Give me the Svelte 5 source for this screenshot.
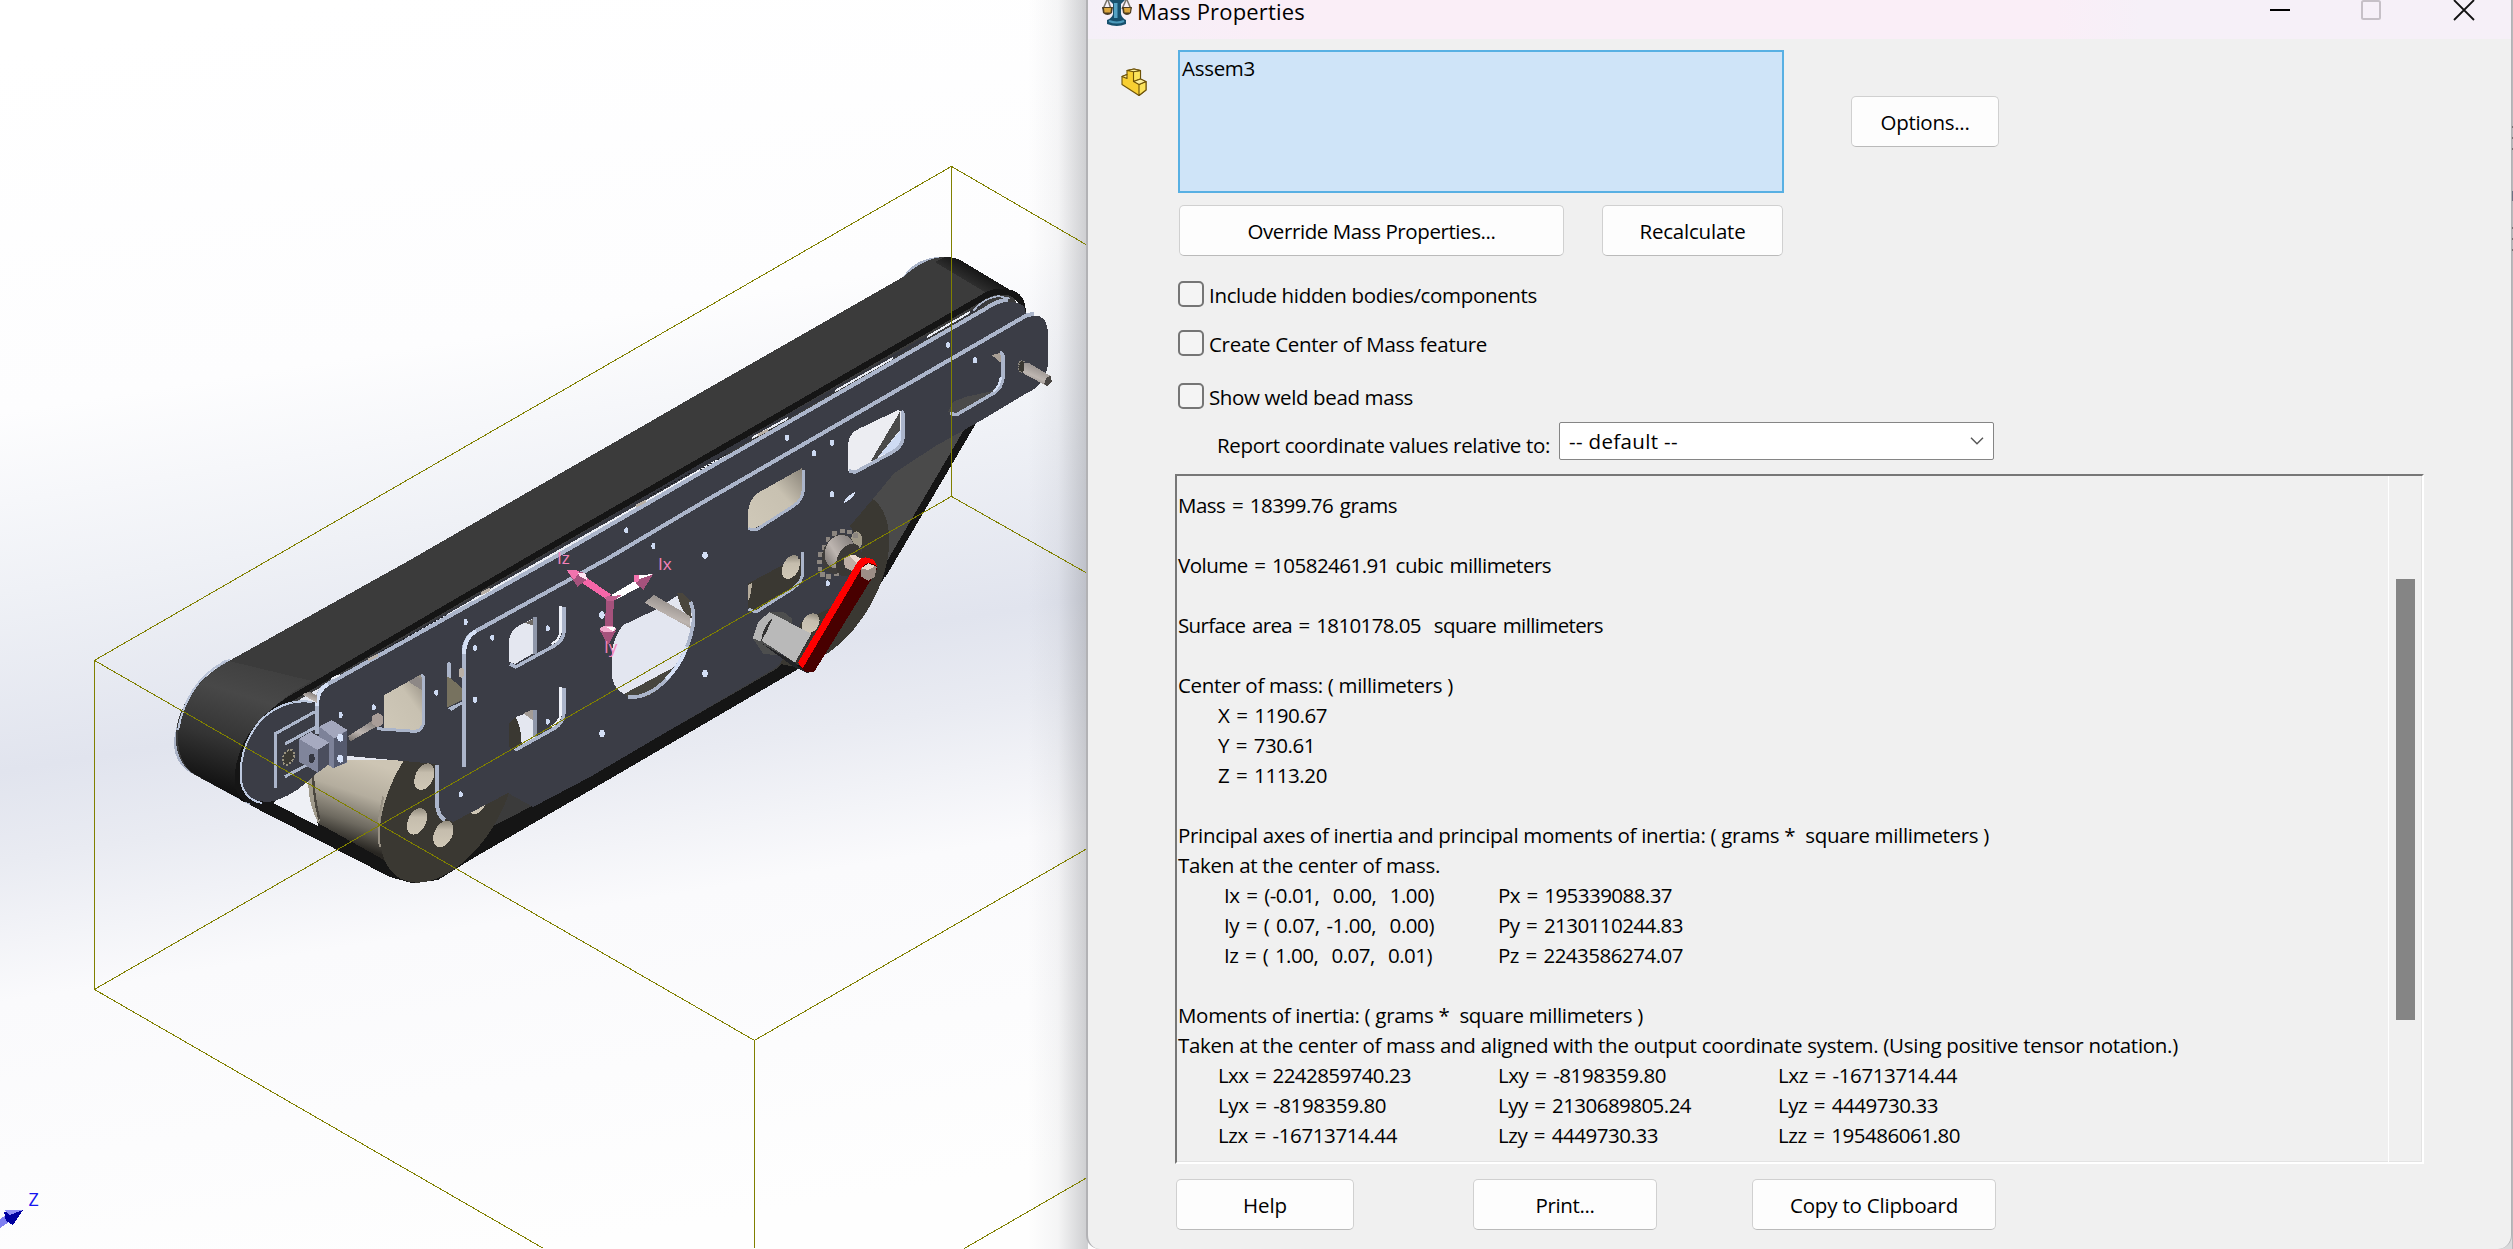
<script>
  // Each text run carries the advance width it should occupy; tracking is derived from it.
  function fit(node, width) {
    const natural = node.getBoundingClientRect().width;
    node.style.letterSpacing = (width - natural) / node.textContent.length + 'px';
  }

  const checks = [
    { label: 'Include hidden bodies/components', w: 328 },
    { label: 'Create Center of Mass feature', w: 278 },
    { label: 'Show weld bead mass', w: 204 }
  ];

  const report = [
    [['Mass = 18399.76 grams', 219]],
    [],
    [['Volume = 10582461.91 cubic millimeters', 373]],
    [],
    [['Surface area = 1810178.05  square millimeters', 425]],
    [],
    [['Center of mass: ( millimeters )', 275]],
    { cols: [['X = 1190.67', 109]] },
    { cols: [['Y = 730.61', 97]] },
    { cols: [['Z = 1113.20', 109]] },
    [],
    [['Principal axes of inertia and principal moments of inertia: ( grams *  square millimeters )', 811]],
    [['Taken at the center of mass.', 262]],
    { axis: true, cols: [['Ix = (-0.01,  0.00,  1.00)', 210], ['Px = 195339088.37', 174]] },
    { axis: true, cols: [['Iy = ( 0.07, -1.00,  0.00)', 210], ['Py = 2130110244.83', 185]] },
    { axis: true, cols: [['Iz = ( 1.00,  0.07,  0.01)', 208], ['Pz = 2243586274.07', 185]] },
    [],
    [['Moments of inertia: ( grams *  square millimeters )', 465]],
    [['Taken at the center of mass and aligned with the output coordinate system. (Using positive tensor notation.)', 1000]],
    { cols: [['Lxx = 2242859740.23', 193], ['Lxy = -8198359.80', 168], ['Lxz = -16713714.44', 179]] },
    { cols: [['Lyx = -8198359.80', 168], ['Lyy = 2130689805.24', 193], ['Lyz = 4449730.33', 160]] },
    { cols: [['Lzx = -16713714.44', 179], ['Lzy = 4449730.33', 160], ['Lzz = 195486061.80', 182]] }
  ].map((r) => (Array.isArray(r) ? { full: true, cols: r } : r));

  const screwsLow = [[947,186],[1027,233],[975,264],[1193,205],[975,419],[859,398],[671,442],[572,465],[1193,485],[932,703]];
  const screwsMid = [[379,151],[460,198],[995,43],[983,310]];
  const screwsBig = [[615,226],[306,405],[615,581],[306,761]];
  const screwsTop = [[744,345],[825,391],[261,623],[396,638],[342,670],[396,793]];
  const teeth = [[1027,153],[1048,156],[1066,166],[1003,161],[984,178],[972,202],[962,224],[958,246],[960,267],[968,284],[986,289],[1010,281]];
</script>

<div class="page">
  <svg class="scene" width="1100" height="1249" viewBox="0 0 1100 1249">
    <defs>
      <linearGradient id="sky" gradientUnits="userSpaceOnUse" x1="340" y1="0" x2="540" y2="1249">
        <stop offset="0" stop-color="#ffffff" />
        <stop offset=".28" stop-color="#fdfdfe" />
        <stop offset=".42" stop-color="#eff1f6" />
        <stop offset=".56" stop-color="#e1e4ee" />
        <stop offset=".63" stop-color="#e9ebf2" />
        <stop offset=".74" stop-color="#fafafc" />
        <stop offset="1" stop-color="#fefefe" />
      </linearGradient>
      <linearGradient id="shade" x1="0" x2="1" y1="0" y2="0">
        <stop offset="0" stop-color="#888a90" stop-opacity="0" />
        <stop offset=".5" stop-color="#888a90" stop-opacity=".08" />
        <stop offset="1" stop-color="#888a90" stop-opacity=".42" />
      </linearGradient>
      <linearGradient id="belt" gradientUnits="userSpaceOnUse" x1="250" y1="640" x2="205" y2="790">
        <stop offset="0" stop-color="#3b3b3b" />
        <stop offset=".35" stop-color="#484848" />
        <stop offset=".65" stop-color="#343434" />
        <stop offset="1" stop-color="#0d0d0d" />
      </linearGradient>
      <linearGradient id="beltEnd" gradientUnits="userSpaceOnUse" x1="965" y1="290" x2="980" y2="264">
        <stop offset="0" stop-color="#3b3b3b" />
        <stop offset="1" stop-color="#0c0c0c" />
      </linearGradient>
      <linearGradient id="drum" gradientUnits="userSpaceOnUse" x1="610" y1="590" x2="530" y2="830">
        <stop offset="0" stop-color="#cdc5b4" />
        <stop offset=".4" stop-color="#b4ad9e" />
        <stop offset=".75" stop-color="#6d695f" />
        <stop offset="1" stop-color="#282622" />
      </linearGradient>
      <linearGradient id="cream" x1="0" y1="1" x2="1" y2="0">
        <stop offset="0" stop-color="#cfc8b8" />
        <stop offset=".6" stop-color="#c8c1b1" />
        <stop offset="1" stop-color="#8b857a" />
      </linearGradient>
      <linearGradient id="bore" x1="0" y1="0" x2=".3" y2="1">
        <stop offset="0" stop-color="#7f796c" />
        <stop offset=".45" stop-color="#c5bdad" />
        <stop offset="1" stop-color="#cec6b5" />
      </linearGradient>
      <linearGradient id="steel" x1="0" y1="1" x2=".5" y2="0">
        <stop offset="0" stop-color="#6d6865" />
        <stop offset=".5" stop-color="#bdb5b0" />
        <stop offset="1" stop-color="#8c8683" />
      </linearGradient>
    </defs>

    <rect width="1100" height="1249" fill="url(#sky)" />
    <rect x="1028" width="60" height="1249" fill="url(#shade)" />

    <g shape-rendering="crispEdges">
      <!-- lower belt run -->
      <path d="M240 800 L390 877 L412 883 L438 880 L470 860 L608 780 L800 668 L883 580 L978 420 L960 400 L700 560 L470 820 L400 860 L272 800Z" fill="#151515" />
      <path d="M480 833 L590 776 L778 668 L800 640 L700 600 L480 780Z" fill="#3b3b3b" />
      <path d="M895 462 L975 425 L880 580 L840 560 L860 500Z" fill="#4a4a4a" />
      <path d="M978 420 L885 578 L880 573 L968 423Z" fill="#151515" />
      <path d="M273 803 L308 774 L318 826Z" fill="#eef0f5" />

      <!-- rear pulley drum and face -->
      <g transform="translate(150 560) scale(.33333)">
        <path d="M475 600 L475 680 Q478 740 505 790 L690 893 L800 965 L860 600Z" fill="url(#drum)" />
        <path d="M475 600 H497 Q485 700 510 780 L505 790 Q478 740 475 680Z" fill="#a09a8c" />
        <path d="M489 610 Q487 700 508 778" stroke="#4a463f" stroke-width="7" fill="none" />
        <ellipse cx="893" cy="705" rx="166" ry="288" transform="rotate(30 893 705)" fill="#3a3832" />
        <path d="M690 860 Q678 800 700 710" stroke="#989184" stroke-width="6" fill="none" />
        <g fill="url(#bore)">
          <ellipse cx="823" cy="650" rx="27" ry="42" transform="rotate(25 823 650)" />
          <ellipse cx="801" cy="784" rx="27" ry="42" transform="rotate(25 801 784)" />
          <ellipse cx="880" cy="822" rx="27" ry="42" transform="rotate(25 880 822)" />
          <ellipse cx="983" cy="725" rx="25" ry="40" transform="rotate(25 983 725)" />
        </g>
      </g>
      <!-- drive pulley face -->
      <ellipse cx="822" cy="579" rx="55" ry="95" transform="rotate(30 822 579)" fill="#3a3832" />

      <!-- top belt -->
      <path d="M228 660 Q180 690 174 740 Q173 765 195 775 L250 805 L300 700Z" fill="#a9b2c6" />
      <path d="M903 277 Q915 258 940 257 L945 262 L905 282Z" fill="#aab4c8" />
      <path d="M229 661 L410 560 L700 393 L903 277 Q925 257 945 257 Q954 257 960 260 L1012 291 L1020 313 L700 468 L290 705 L245 802 L195 775 Q170 760 178 720 Q190 682 229 661Z" fill="#3b3b3b" />
      <path d="M229 661 Q190 682 180 720 Q172 760 196 775 L245 802 L242 760 Q255 710 312 681Z" fill="url(#belt)" />
      <path d="M945 257 Q954 257 960 260 L1012 291 L985 292 L935 262Z" fill="url(#beltEnd)" />
      <path d="M224 662 Q187 682 178 730 M222 662 L230 660" stroke="#bac4d8" stroke-width="2" fill="none" />
      <path d="M1023 315 Q1023 292 1004 292 Q993 290 980 299 L700 461 L545 550 L290 699 Q235 735 238 785 Q242 803 262 802" fill="none" stroke="#151515" stroke-width="6" />

      <!-- far roller plate -->
      <path d="M316 702 Q285 698 262 719 Q238 745 241 782 Q248 806 275 801 Q300 792 317 772 L340 740 L330 700Z" fill="#3b3d46" />
      <path d="M312 702 Q285 698 262 719 Q238 745 241 782 Q245 800 262 803" fill="none" stroke="#bdc9df" stroke-width="2" />
      <!-- inner side plate -->
      <path d="M317 700 Q316 688 330 682 L553 559 L700 474 L985 310 Q1010 296 1024 306 L1030 330 L960 430 L700 600 L436 763 L433 763 L348 756 L320 760Z" fill="#3b3d46" />
      <path d="M290 704 L316 688 L332 680 L960 320 L975 312 L988 301 L700 464Z" fill="#34363e" />
      <!-- front side plate -->
      <path d="M464 767 V648 Q464 639 475 633 L607 558 L700 505 L1025 317 Q1048 310 1048 335 V365 Q1045 385 1027 393 L980 421 L900 466 L877 494 L850 526 L863 547 L847 600 L801 622 L793 647 L777 667 L590 777 L533 807 L508 793 L453 822 Q440 819 438 807 L436 763Z" fill="#3b3d46" />
      <path d="M348 756 L316 755 L330 700 L470 640 L700 520 L470 770 L436 764Z" fill="#3b3d46" />
      <g fill="none" stroke="#abb5ca" stroke-width="4">
        <path d="M317 734 V702 Q317 690 328 684 L553 558 L700 473 L985 309 Q997 300 1008 300" />
        <path d="M464 767 V650 Q464 638 476 631 L607 559 L700 504 L1022 318 Q1028 314 1034 314" />
        <path d="M437 765 V805 Q438 816 445 820" />
      </g>
      <path d="M317 706 Q317 690 328 684 M464 654 Q464 638 476 631" fill="none" stroke="#d5e0f5" stroke-width="4" />
      <g stroke="#e8ebf2" stroke-width="2">
        <path d="M473 600 L500 584.500 L604 525 M752 438 L788 418 M835 391 L893 358 M331 679 L340 675 M927 337 L970 312" />
      </g>
      <g stroke="#17181c" stroke-width="1" stroke-dasharray="2 2">
        <path d="M382 651 L448 614 M650 496 L690 473 M700 470 L727 454" />
      </g>
      <g stroke="#b9b0a6" stroke-width="3"><path d="M368 660 L378 655 M481 594 L490 589 M636 506 L646 501 M758 435 L768 430" /></g>

      <!-- tensioner, windows and screws at the idler end -->
      <g transform="translate(150 560) scale(.33333)">
        <path d="M455 402 L500 428 V405 L478 396Z" fill="url(#steel)" />
        <path d="M378 685 V520 L495 455 M405 552 L500 500 M405 650 L470 615" fill="none" stroke="#abb5ca" stroke-width="9" />
        <ellipse cx="415" cy="592" rx="15" ry="24" transform="rotate(25 415 592)" fill="#3c3a34" stroke="#99937f" stroke-width="6" stroke-dasharray="6 5" />
        <path d="M595 528 L670 480 L682 498 L600 545Z" fill="url(#steel)" />
        <path d="M665 468 L685 458 L700 470 V492 L682 502 L665 490Z" fill="#a99d98" />
        <path d="M508 500 L545 480 L592 510 V608 L550 624 L508 600Z" fill="#7d8299" />
        <path d="M508 500 L545 480 L592 510 L553 535Z" fill="#a3a7bd" />
        <path d="M553 535 L592 512 V606 L553 623Z" fill="#555a6e" />
        <path d="M447 537 L482 516 L538 548 V610 L503 638 L447 605Z" fill="#80859b" />
        <path d="M447 537 L482 516 L538 548 L503 570Z" fill="#a6aac0" />
        <path d="M503 570 L538 548 V612 L503 638Z" fill="#4b4e5e" />
        <ellipse cx="485" cy="595" rx="9" ry="14" fill="#353741" />
        <ellipse cx="571" cy="533" rx="9" ry="12" fill="#d6e2fa" />
        <ellipse cx="571" cy="596" rx="9" ry="12" fill="#d6e2fa" />

        <path d="M703 405 L810 345 Q826 342 826 360 V480 Q822 515 795 516 L703 505Z" fill="url(#cream)" />
        <path d="M775 365 L800 350 L818 358 V392Z" fill="#8d8886" />
        <path d="M812 347 Q822 346 822 358 V482 Q818 513 795 514 L680 506" fill="none" stroke="#abb5ca" stroke-width="9" />
        <path d="M891 345 L937 385 V420 L891 443Z" fill="#77725f" />
        <path d="M891 350 V310 Q897 300 902 310 V355Z M893 444 L937 425 V432 L905 452Z" fill="#abb5ca" />
        <ellipse cx="934" cy="338" rx="8" ry="15" fill="#b9b0a6" />
        <path d="M1077 240 Q1080 212 1110 195 L1150 175 V280 L1095 312 L1077 305Z" fill="#e4e7f0" />
        <path d="M1125 188 L1160 172 V200Z" fill="#6e6a66" />
        <path d="M1155 172 V282" stroke="#8f97a9" stroke-width="11" />
        <path d="M1232 138 V215 Q1228 240 1205 252" stroke="#eef1f8" stroke-width="7" fill="none" />
        <path d="M1242 142 V215 Q1240 240 1215 256 L1097 321 L1080 312" stroke="#abb5ca" stroke-width="10" fill="none" />
        <path d="M1077 560 V490 L1100 470 L1155 450 V540 L1092 572Z" fill="#e4e7f0" />
        <path d="M1077 560 V490 L1097 472 Q1115 505 1115 555 L1090 570Z" fill="#3a3832" />
        <path d="M1120 460 L1150 448 V482Z" fill="#a39c96" />
        <path d="M1155 450 V530" stroke="#8f97a9" stroke-width="11" />
        <path d="M1232 382 V465 Q1228 485 1205 500" stroke="#eef1f8" stroke-width="7" fill="none" />
        <path d="M1242 385 V460 Q1240 488 1215 504 L1095 571" stroke="#abb5ca" stroke-width="10" fill="none" />
        {#each screwsLow as [x, y]}
          <ellipse cx={x} cy={y} rx="6" ry="9" fill="#cddaf2" />
        {/each}
      </g>

      <!-- centre window, gearbox, crank -->
      <g transform="translate(500 480) scale(.33333)">
        <path d="M370 435 L465 390 L535 345 Q585 360 583 430 Q572 530 500 600 Q440 655 385 648 Q335 630 335 575 V520 Q340 470 370 435Z" fill="#e3e6f0" />
        <path d="M372 642 L525 560 Q500 620 440 650 L390 655Z" fill="#47463f" />
        <path d="M532 340 Q548 330 572 365 L575 415 L560 405 Q540 385 532 340Z" fill="#4a463d" />
        <path d="M433 368 L462 345 L570 408 L572 445Z" fill="url(#steel)" />
        <path d="M571 365 Q587 400 578 440 Q562 530 498 600 Q440 657 385 651" fill="none" stroke="#abb5ca" stroke-width="11" />
        <path d="M560 500 Q540 560 498 597" fill="none" stroke="#d5e0f5" stroke-width="11" />

        <path d="M745 90 Q750 55 775 38 L905 -35 V30 Q905 60 880 78 L765 145 L745 145Z" fill="url(#cream)" />
        <path d="M910 -30 V30 Q907 62 880 78 L768 150 L745 146" fill="none" stroke="#abb5ca" stroke-width="9" />
        <path d="M745 310 L905 225 V290 L880 325 L765 392 L745 385Z" fill="#3a3832" />
        <ellipse cx="873" cy="261" rx="24" ry="38" transform="rotate(25 873 261)" fill="url(#bore)" />
        <path d="M895 205 H905 V232 L895 236Z" fill="#3b3d46" />
        <path d="M745 315 L757 307 L750 352 L745 360Z" fill="#b4ab9b" />
        <path d="M909 215 V275 Q907 305 880 325 L768 396 L745 388" fill="none" stroke="#abb5ca" stroke-width="9" />

        <ellipse cx="1070" cy="182" rx="17" ry="28" fill="#a09988" />
        {#each teeth as [x, y]}
          <rect x={x - 7} y={y - 7} width="14" height="14" fill="#8c8680" />
        {/each}
        <ellipse cx="1015" cy="222" rx="46" ry="62" transform="rotate(25 1015 222)" fill="#3f3d3b" />
        <ellipse cx="1018" cy="215" rx="42" ry="52" transform="rotate(25 1018 215)" fill="url(#steel)" />
        <ellipse cx="1046" cy="240" rx="34" ry="52" transform="rotate(25 1046 240)" fill="#3b3835" />
        <path d="M1030 235 L1050 223 L1095 248 L1080 285 L1035 262Z" fill="#bfaea4" />
        <path d="M1045 226 L1065 225 L1095 243 L1085 262Z" fill="#ead9cf" />

        <ellipse cx="932" cy="430" rx="24" ry="32" transform="rotate(35 932 430)" fill="url(#bore)" />
        <path d="M762 480 L775 425 L810 397 L850 395 L875 415 L885 500 L830 525 L790 522Z" fill="#4d4e4e" />
        <path d="M758 475 L775 425 L808 397 L825 405 L783 485Z" fill="#b5b5b5" />
        <path d="M785 482 Q790 440 825 405 L935 462 L885 548Z" fill="#b9b9b9" />
        <path d="M783 485 Q788 440 820 410 L800 455 Z" fill="#333" />
        <path d="M785 490 L885 548 L895 560 L930 570 L925 580 L880 560Z" fill="#222326" />
        <path d="M888 545 L935 465" stroke="#333" stroke-width="5" stroke-dasharray="5 3" />
        <path d="M896 555 L1075 255 Q1090 225 1118 240 Q1138 255 1128 275 L943 575 L915 575Z" fill="#480000" />
        <path d="M894 548 L1070 250 Q1085 222 1118 238 Q1130 250 1130 258 Q1105 240 1088 260 L908 565Z" fill="#fe0000" />
        <path d="M1083 265 L1105 250 L1130 260 L1125 290 L1105 302 L1083 290Z" fill="#9c8e86" />
        <path d="M1083 265 L1105 250 L1125 258 L1106 270Z" fill="#e9d8cd" />
        {#each screwsMid as [x, y]}
          <ellipse cx={x} cy={y} rx="6" ry="9" fill="#cddaf2" />
        {/each}
        {#each screwsBig as [x, y]}
          <ellipse cx={x} cy={y} rx="8" ry="11" fill="#d3dff5" />
        {/each}
      </g>

      <!-- windows and shaft at the far end -->
      <g transform="translate(700 230) scale(.33333)">
        <path d="M445 640 Q448 610 475 597 L595 540 L605 545 V640 L580 670 L460 728 L445 722Z" fill="#ecedf2" />
        <path d="M600 545 V600 L525 692 L512 694Z" fill="#4a4a4a" />
        <path d="M602 600 V640 L575 665 L535 680Z" fill="#cfdbf3" />
        <path d="M604 543 Q609 545 609 555 V625 Q605 650 580 665 L465 727 L447 722" fill="none" stroke="#abb5ca" stroke-width="10" />
        <path d="M745 545 L760 515 L800 500 L870 485 L890 470 L870 495 L770 552Z" fill="#4a4a4a" />
        <path d="M875 375 L905 368 V400Z" fill="#a9a096" />
        <path d="M900 368 Q909 370 909 380 V445 Q905 475 880 490 L770 554 L750 550" fill="none" stroke="#abb5ca" stroke-width="10" />
        <path d="M903 440 Q900 468 880 485" stroke="#d5e0f5" stroke-width="7" fill="none" />
        <path d="M430 820 Q440 795 468 785 Q455 810 430 820Z" fill="#d5e0f5" />
        <ellipse cx="966" cy="410" rx="10" ry="18" fill="#3a3832" stroke="#8a857c" stroke-width="4" stroke-dasharray="4 3" />
        <path d="M972 400 L985 398 L1052 438 L1040 468 L970 430Z" fill="url(#steel)" />
        <path d="M1038 445 L1052 437 L1056 455 L1042 470 L1032 462Z" fill="#4a4643" />
        <path d="M820 242 Q850 205 895 198 L930 206" stroke="#abb5ca" stroke-width="5" fill="none" />
        {#each screwsTop as [x, y]}
          <ellipse cx={x} cy={y} rx="6" ry="9" fill="#cddaf2" />
        {/each}
      </g>

      <!-- bounding box -->
      <path transform="translate(-.6 -.6)" d="M95 661 L952 167 L1088 246 M95 661 V990 L952 497 V167 M952 497 L1088 574 M95 661 L755 1041 V1249 M95 990 L544 1249 M755 1041 L1088 849 M965 1249 L1088 1178" fill="none" stroke="#808000" stroke-width="1" />

      <!-- principal axes triad -->
      <g transform="translate(500 480) scale(.33333)">
        <path d="M318 355 L342 360 L337 450 L315 445Z" fill="#a5527c" />
        <path d="M240 305 L252 288 L333 343 L320 358Z" fill="#f566a8" />
        <path d="M335 345 L405 303 L418 322 L345 360Z" fill="#ffffff" />
        <path d="M315 350 L365 345 L342 362 L320 362Z" fill="#c0608f" />
        <path d="M200 270 L250 277 L262 298 L232 320Z" fill="#a5527c" />
        <path d="M200 270 L240 272 L222 300Z" fill="#f273ad" />
        <path d="M235 280 L255 278 L262 300 L240 290Z" fill="#ffe4f2" />
        <path d="M403 285 L459 283 L430 330 L408 310Z" fill="#a5527c" />
        <path d="M403 285 L459 283 L415 298 L403 306Z" fill="#fff" />
        <path d="M403 285 L418 284 L415 306 L403 305Z" fill="#f273ad" />
        <path d="M299 450 L348 452 L324 496Z" fill="#a5527c" />
        <ellipse cx="324" cy="447" rx="24" ry="10" fill="#f3a9cd" />
        <path d="M318 440 L345 442 L340 455Z" fill="#fff" />
      </g>
      <!-- view triad -->
      <path d="M0 1219 L6 1215 L9 1222 L0 1228Z" fill="#8080f0" />
      <path d="M4 1212 L23 1210 L13 1225 L6 1221Z" fill="#0000a0" />
      <path d="M4 1210 L23 1210 L10 1215Z" fill="#8f8ff5" />
    </g>
    <g class="axis">
      <text x="557" y="564">Iz</text>
      <text x="658" y="570">Ix</text>
      <text x="604" y="653">Iy</text>
      <text class="z" x="28.500" y="1205.500">Z</text>
    </g>
  </svg>

  <section class="dialog">
    <header>
      <svg class="scales" width="30" height="26" viewBox="0 0 30 26">
        <path d="M7 0 H23 L19 4 V14 Q20 18 24 20 V24 Q15 28 5 24 V20 Q10 18 11 14 V4Z" fill="#17506c" />
        <path d="M12 3 H15.500 V18 H12Z" fill="#55a3c4" />
        <path d="M7 21 Q15 24 22 21" stroke="#4b9abb" stroke-width="2" fill="none" />
        <path d="M5 0 L1 9 M6 0 L9 9 M24 0 L20 9 M25 0 L29 9" stroke="#77736a" stroke-width="1.5" />
        <path d="M0 7 H11 L10 13 Q5.500 17 1 13Z M20 7 H30 L29 13 Q25 17 21 13Z" fill="#4c3c22" />
        <path d="M2 8 H9 L8.500 12.500 H2.500Z M22 8 H28.500 L28 12.500 H22.500Z" fill="#dba63c" />
      </svg>
      <h1><span use:fit={168}>Mass Properties</span></h1>
      <svg class="controls" width="206" height="22" viewBox="0 0 206 22" fill="none">
        <path d="M0 10 H20" stroke="#000" stroke-width="2" />
        <rect x="92" y="1" width="18" height="18" rx="1.5" stroke="#c6c0c7" stroke-width="2" />
        <path d="M184 0 L204 20 M204 0 L184 20" stroke="#111" stroke-width="1.8" />
      </svg>
    </header>

    <div class="selection">
      <svg class="part" width="26" height="29" viewBox="0 0 26 29" stroke="#6d5208" stroke-width="1.1" stroke-linejoin="round">
        <path d="M1 8.500 L6 6.500 V2.500 L13 1 L19.500 2.500 V11 L25 14 V22 L18 27.500 L1 16.500Z" fill="#f8cf32" />
        <path d="M12.500 3.800 L19.500 2.500 V11 L12.500 13.500Z M18 16.500 L25 13.500 V22 L18 27.500Z" fill="#fbe25a" />
        <path d="M6 2.500 L13 1 L19.500 2.500 L12.500 3.800Z M12.500 13.500 L19.500 11 L25 13.500 L18 16.500Z M1 8.500 L6 6.500 V10.500Z" fill="#fdf0a0" />
      </svg>
      <div class="listbox"><span use:fit={73}>Assem3</span></div>
      <button class="options"><span use:fit={89}>Options...</span></button>
    </div>

    <div class="actions">
      <button class="override"><span use:fit={248}>Override Mass Properties...</span></button>
      <button class="recalc"><span use:fit={106}>Recalculate</span></button>
    </div>

    <div class="checks">
      {#each checks as c}
        <label><i></i><span use:fit={c.w}>{c.label}</span></label>
      {/each}
    </div>

    <div class="coords">
      <div class="caption"><span use:fit={333}>Report coordinate values relative to:</span></div>
      <div class="select">
        <span use:fit={109}>-- default --</span>
        <svg width="14" height="8" viewBox="0 0 14 8" fill="none"><path d="M1 .8 L7 6.800 L13 .8" stroke="#555" stroke-width="1.4" /></svg>
      </div>
    </div>

    <div class="panel">
      <div class="report">
        {#each report as line}
          <div class="line" class:full={line.full} class:axes={line.axis}>
            {#each line.cols as [text, w]}
              <div><span class:equation={text.includes('=')} use:fit={w}>{text}</span></div>
            {/each}
          </div>
        {/each}
      </div>
      <div class="track"><div class="thumb"></div></div>
    </div>

    <footer>
      <button class="help"><span use:fit={44}>Help</span></button>
      <button class="print"><span use:fit={59}>Print...</span></button>
      <button class="copy"><span use:fit={168}>Copy to Clipboard</span></button>
    </footer>
  </section>

  <aside>
    {#each Array(7) as _, i}
      <i class:gap={i === 3}></i>
    {/each}
  </aside>
</div>

<style>
  .page {
    display: flex;
    width: 2513px;
    height: 1249px;
    overflow: hidden;
    background: #d9d9db;
    font: 20.5px/30px 'Open Sans', 'Noto Sans', sans-serif;
    color: #000;
  }
  .scene { flex: none; display: block; margin-right: -14px; }
  .axis text { font: 17px 'Open Sans', sans-serif; fill: #f582ba; }
  .axis .z { fill: #1515f0; font-size: 18px; }
  span { display: inline-block; white-space: pre; }

  .dialog {
    flex: none;
    position: relative;
    box-sizing: border-box;
    width: 1426px;
    height: 1249px;
    border: solid #b2b2b5;
    border-width: 0 1px 0 2px;
    border-radius: 0 0 14px 14px;
    background: #f0f0f0;
  }
  header {
    display: flex;
    height: 39px;
    padding-left: 14px;
    background: linear-gradient(90deg, #f5f0f8, #faeef7 12%, #faeef7 68%, #f6f0f8 74%);
  }
  h1 { margin: 0 0 0 5px; font-size: 22px; font-weight: 400; line-height: 22px; }
  .controls { margin: 0 35px 0 auto; }

  button {
    box-sizing: border-box;
    height: 51px;
    padding: 0;
    border: 1px solid #d0d0d0;
    border-bottom-color: #bababa;
    border-radius: 5px;
    background: #fdfdfd;
    font: inherit;
    color: inherit;
  }
  .selection { display: flex; align-items: flex-start; margin-top: 11px; padding-left: 33px; }
  .part { margin-top: 18px; }
  .listbox {
    box-sizing: border-box;
    width: 606px;
    height: 143px;
    margin-left: 31px;
    padding: 1px 2px;
    border: 2px solid #58b0e3;
    background: #cfe4f8;
  }
  .options { width: 148px; margin: 46px 0 0 67px; }
  .actions { display: flex; gap: 38px; margin-top: 12px; padding-left: 91px; }
  .override { width: 385px; }
  .recalc { width: 181px; }

  .checks { display: flex; flex-direction: column; margin-top: 25px; padding-left: 90px; }
  .checks label { display: flex; gap: 5px; height: 26px; margin-bottom: 23px; }
  .checks label:nth-child(2) { margin-bottom: 27px; }
  .checks label:last-child { margin-bottom: 13px; }
  .checks i {
    box-sizing: border-box;
    width: 26px;
    height: 26px;
    border: 2px solid #757575;
    border-radius: 5px;
    background: #f4f4f4;
  }
  .checks span { margin-top: -1px; }

  .coords { display: flex; padding-left: 129px; }
  .caption { width: 342px; padding-top: 8px; }
  .select {
    box-sizing: border-box;
    display: flex;
    align-items: center;
    justify-content: space-between;
    width: 435px;
    height: 38px;
    padding: 0 9px;
    border: 1px solid #858585;
    border-radius: 2px;
    background: #fff;
  }

  .panel {
    box-sizing: border-box;
    display: flex;
    width: 1249px;
    height: 690px;
    margin: 14px 0 0 87px;
    border: 2px solid;
    border-color: #777 #fff #fff #777;
    box-shadow: inset -1px -1px #e3e3e3;
  }
  .report { width: 1211px; padding-top: 14px; }
  .line { display: grid; grid-template-columns: repeat(3, 280px); height: 30px; padding-left: 41px; }
  .line.full { padding-left: 1px; grid-template-columns: 1fr; }
  .line.axes div:first-child { padding-left: 6px; }
  .equation { word-spacing: 1.8px; }
  .track { width: 33px; border-left: 1px solid #fff; }
  .thumb { width: 19px; height: 441px; margin: 103px 0 0 7px; background: #858585; }

  footer { display: flex; margin-top: 15px; padding-left: 88px; }
  .help { width: 178px; }
  .print { width: 184px; margin-left: 119px; }
  .copy { width: 244px; margin-left: 95px; }

  aside {
    flex: none;
    display: flex;
    flex-direction: column;
    gap: 9px;
    width: 3px;
    padding-top: 126px;
    background: #b9b9bb;
  }
  aside i { height: 2px; background: #737373; }
  aside i.gap { height: 10px; margin: 32px 0 17px; background: #6c7484; }
</style>
